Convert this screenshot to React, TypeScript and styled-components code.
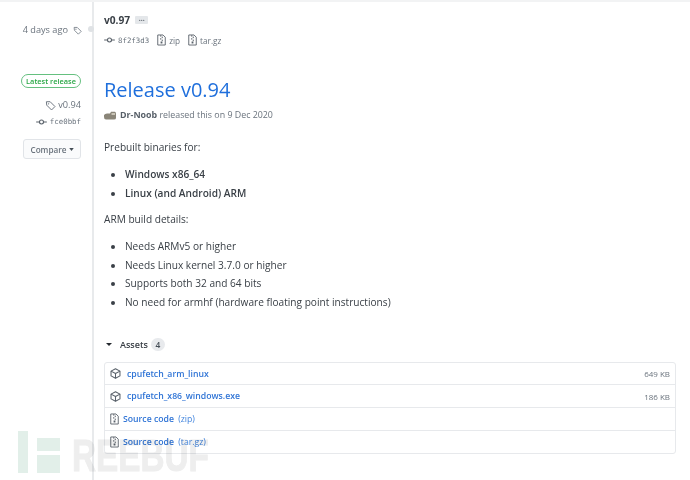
import React from "react";
import styled, { createGlobalStyle } from "styled-components";

const Global = createGlobalStyle`
  html, body { margin: 0; padding: 0; background: #fff; }
  body { font-family: "Open Sans", "Noto Sans", "Liberation Sans", sans-serif; color: #24292e; }
  * { box-sizing: border-box; }
`;

const Page = styled.div`
  position: relative;
  width: 690px;
  height: 480px;
  overflow: hidden;
  background: #fff;
  border-top: 2px solid #f2f3f4;
`;

const Columns = styled.div`
  display: grid;
  grid-template-columns: 92px 1fr;
  height: 478px;
`;

const Sidebar = styled.aside`
  position: relative;
  display: flex;
  flex-direction: column;
  align-items: flex-end;
  padding: 21px 11px 0 0;
  border-right: 2px solid #e8eaec;
  width: 94px;
`;

const TimeRow = styled.div`
  display: flex;
  align-items: center;
  gap: 5px;
  font-size: 9.2px;
  line-height: 14px;
  color: #6a737d;
  margin-right: -1px;
`;

const Dot = styled.span`
  position: absolute;
  left: 88px;
  top: 24px;
  width: 6px;
  height: 6px;
  border-radius: 50%;
  background: #dfe2e5;
`;

const LatestBadge = styled.span`
  margin-top: 37px;
  height: 14px;
  width: 60px;
  display: flex;
  align-items: center;
  justify-content: center;
  border: 1px solid #65c07f;
  border-radius: 8px;
  font-size: 7.4px;
  font-weight: 600;
  color: #28a745;
  white-space: nowrap;
`;

const TagRow = styled.div`
  margin-top: 10px;
  display: flex;
  align-items: center;
  gap: 2px;
  font-size: 9.2px;
  line-height: 14px;
  color: #6a737d;
`;

const CommitRow = styled.div`
  margin-top: 4px;
  display: flex;
  align-items: center;
  gap: 3px;
  font-family: "DejaVu Sans Mono", "Liberation Mono", monospace;
  font-size: 7.4px;
  line-height: 12px;
  color: #6a737d;
`;

const CompareButton = styled.div`
  margin-top: 11px;
  width: 58px;
  height: 20px;
  display: flex;
  align-items: center;
  justify-content: center;
  gap: 2px;
  border: 1px solid #e1e4e8;
  border-radius: 3px;
  background: #fafbfc;
  font-size: 8.2px;
  font-weight: 600;
  color: #6a737d;
`;

const Main = styled.main`
  padding: 10px 14px 0 10px;
  margin-left: 2px;
`;

const VersionRow = styled.div`
  display: flex;
  align-items: center;
  gap: 5px;
  height: 16px;
`;

const Version = styled.span`
  font-size: 10.2px;
  font-weight: 700;
  color: #3a4047;
`;

const Ellipsis = styled.span`
  width: 13px;
  height: 8px;
  border-radius: 1px;
  background: #e4e7ea;
  color: #586069;
  font-size: 7px;
  line-height: 6px;
  font-weight: 700;
  text-align: center;
`;

const MetaRow = styled.div`
  display: flex;
  align-items: center;
  margin-top: 6px;
  height: 12px;
  gap: 8px;
  font-size: 8.2px;
  color: #6a737d;
`;

const MetaItem = styled.span`
  display: flex;
  align-items: center;
  gap: 3px;
`;

const Mono = styled.span`
  font-family: "DejaVu Sans Mono", "Liberation Mono", monospace;
  font-size: 7.4px;
`;

const Title = styled.h1`
  margin: 29px 0 0;
  font-size: 20px;
  line-height: 30px;
  font-weight: 400;
  color: #1f6fdc;
`;

const Byline = styled.div`
  display: flex;
  align-items: center;
  gap: 4px;
  margin-top: 3px;
  height: 14px;
  font-size: 8.85px;
  color: #6a737d;
`;

const Author = styled.b`
  font-weight: 700;
  color: #586069;
`;

const Para = styled.p`
  margin: 17px 0 0;
  font-size: 10.15px;
  line-height: 16px;
  color: #3a4047;
`;

const List = styled.ul`
  margin: 11px 0 0;
  padding: 0 0 0 21px;
  font-size: 10.15px;
  line-height: 16px;
  color: #3a4047;
`;

const Item = styled.li`
  margin-bottom: 2.8px;
`;

const Strong = styled.strong`
  font-weight: 600;
`;

const SecondPara = styled(Para)`
  margin-top: 10px;
`;

const AssetsHead = styled.div`
  display: flex;
  align-items: center;
  margin: 27px 0 0;
  height: 14px;
  font-size: 9px;
  font-weight: 600;
  color: #3a4047;
`;

const Caret = styled.span`
  width: 0;
  height: 0;
  margin: 1px 8px 0 2px;
  border-left: 3px solid transparent;
  border-right: 3px solid transparent;
  border-top: 3px solid #24292e;
`;

const Count = styled.span`
  margin-left: 3px;
  width: 14px;
  height: 13px;
  border-radius: 7px;
  background: #e8eaed;
  font-size: 8.4px;
  line-height: 13px;
  text-align: center;
  color: #444d56;
`;

const AssetBox = styled.div`
  margin-top: 11px;
  border: 1px solid #e7e9ec;
  border-radius: 3px;
`;

const AssetRow = styled.div`
  display: flex;
  align-items: center;
  justify-content: space-between;
  height: 23px;
  padding: 0 5px;
  border-top: 1px solid #e7e9ec;
  &:first-child {
    border-top: 0;
    height: 21px;
  }
`;

const AssetName = styled.span<{ $indent: number }>`
  display: flex;
  align-items: center;
  gap: ${(p) => p.$indent}px;
  font-size: 8.7px;
  font-weight: 600;
  color: #2f74d6;
`;

const Ext = styled.span`
  font-weight: 400;
  color: #3f83dd;
  margin-left: 2px;
`;

const Size = styled.span`
  font-size: 8px;
  color: #6a737d;
`;

const Watermark = styled.div`
  position: absolute;
  left: 18px;
  top: 429px;
  display: flex;
  align-items: flex-end;
  height: 42px;
  pointer-events: none;
  z-index: 2;
  mix-blend-mode: multiply;
`;

const WatermarkText = styled.span`
  display: inline-block;
  font-family: "Liberation Sans", sans-serif;
  font-weight: 700;
  font-size: 45px;
  line-height: 42px;
  color: #eeeeee;
  -webkit-text-stroke: 1px #eeeeee;
  margin-left: 12px;
  transform: translateY(4px) scaleX(0.74);
  transform-origin: left center;
  width: 135px;
`;

const TagIcon = ({ size = 10 }: { size?: number }) => (
  <svg width={size} height={size} viewBox="0 0 16 16" fill="none" stroke="#6a737d" strokeWidth="1.4">
    <path d="M2 2.5 h5.5 l7 7 -5 5 -7-7z" strokeLinejoin="round" />
    <circle cx="5.2" cy="5.6" r="1" fill="#6a737d" stroke="none" />
  </svg>
);

const CommitIcon = () => (
  <svg width="11" height="8" viewBox="0 0 16 12" fill="none" stroke="#586069" strokeWidth="1.6">
    <circle cx="8" cy="6" r="3" />
    <path d="M0 6h5M11 6h5" />
  </svg>
);

const ZipIcon = () => (
  <svg width="9" height="12" viewBox="0 0 12 15" fill="none" stroke="#586069" strokeWidth="1.2">
    <path d="M1 .8h7l3 3v10.4H1z" />
    <path d="M5 1v2M7 3v2M5 5v2M7 7v2" strokeWidth="1.3" />
    <rect x="4.8" y="9.5" width="2.4" height="2.6" fill="#586069" stroke="none" />
  </svg>
);

const BoxIcon = () => (
  <svg width="11" height="11" viewBox="0 0 16 16" fill="none" stroke="#586069" strokeWidth="1.5" strokeLinejoin="round">
    <path d="M8 1 14.5 4.5v7L8 15 1.5 11.5v-7z" />
    <path d="M1.5 4.5 8 8l6.5-3.5M8 8v7" />
  </svg>
);

const Avatar = () => (
  <svg width="12" height="9" viewBox="0 0 12 9">
    <path d="M0 4 Q1 2.5 3 2.5 L6 2.5 L7 0.8 H11 Q12 1 12 3 V7 Q12 8.5 10 8.5 H2 Q0 8.5 0 6z" fill="#8a8578" />
    <rect x="7.5" y="2" width="3.5" height="2" fill="#c9c4b6" />
  </svg>
);

const LogoMark = () => (
  <svg width="42" height="42" viewBox="0 0 42 42">
    <rect x="0" y="0" width="10" height="42" fill="#e2efe9" />
    <rect x="19" y="7" width="23" height="13" fill="#e2efe9" />
    <rect x="19" y="24" width="23" height="18" fill="#e2efe9" />
  </svg>
);

export default function App() {
  return (
    <Page>
      <Global />
      <Columns>
        <Sidebar>
          <TimeRow>
            4 days ago <TagIcon size={9} />
          </TimeRow>
          <Dot />
          <LatestBadge>Latest release</LatestBadge>
          <TagRow>
            <TagIcon size={11} /> v0.94
          </TagRow>
          <CommitRow>
            <CommitIcon /> fce0bbf
          </CommitRow>
          <CompareButton>
            Compare
            <svg width="5" height="3" viewBox="0 0 6 4">
              <path d="M0 0h6L3 4z" fill="#444d56" />
            </svg>
          </CompareButton>
        </Sidebar>
        <Main>
          <VersionRow>
            <Version>v0.97</Version>
            <Ellipsis>…</Ellipsis>
          </VersionRow>
          <MetaRow>
            <MetaItem>
              <CommitIcon />
              <Mono>8f2f3d3</Mono>
            </MetaItem>
            <MetaItem>
              <ZipIcon />
              zip
            </MetaItem>
            <MetaItem>
              <ZipIcon />
              tar.gz
            </MetaItem>
          </MetaRow>
          <Title>Release v0.94</Title>
          <Byline>
            <Avatar />
            <span>
              <Author>Dr-Noob</Author> released this on 9 Dec 2020
            </span>
          </Byline>
          <Para>Prebuilt binaries for:</Para>
          <List>
            <Item>
              <Strong>Windows x86_64</Strong>
            </Item>
            <Item>
              <Strong>Linux (and Android) ARM</Strong>
            </Item>
          </List>
          <SecondPara>ARM build details:</SecondPara>
          <List>
            <Item>Needs ARMv5 or higher</Item>
            <Item>Needs Linux kernel 3.7.0 or higher</Item>
            <Item>Supports both 32 and 64 bits</Item>
            <Item>No need for armhf (hardware floating point instructions)</Item>
          </List>
          <AssetsHead>
            <Caret />
            Assets
            <Count>4</Count>
          </AssetsHead>
          <AssetBox>
            <AssetRow>
              <AssetName $indent={6}>
                <BoxIcon />
                cpufetch_arm_linux
              </AssetName>
              <Size>649 KB</Size>
            </AssetRow>
            <AssetRow>
              <AssetName $indent={6}>
                <BoxIcon />
                cpufetch_x86_windows.exe
              </AssetName>
              <Size>186 KB</Size>
            </AssetRow>
            <AssetRow>
              <AssetName $indent={4}>
                <ZipIcon />
                <span>
                  Source code<Ext> (zip)</Ext>
                </span>
              </AssetName>
            </AssetRow>
            <AssetRow>
              <AssetName $indent={4}>
                <ZipIcon />
                <span>
                  Source code<Ext> (tar.gz)</Ext>
                </span>
              </AssetName>
            </AssetRow>
          </AssetBox>
        </Main>
      </Columns>
      <Watermark>
        <LogoMark />
        <WatermarkText>REEBUF</WatermarkText>
      </Watermark>
    </Page>
  );
}
